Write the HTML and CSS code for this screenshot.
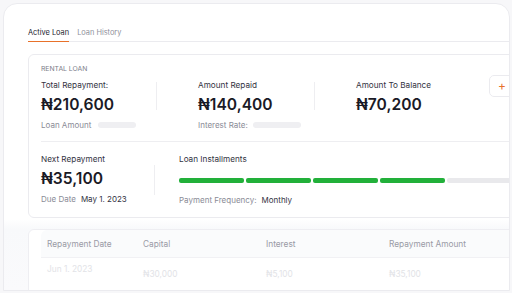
FILE: index.html
```html
<!DOCTYPE html>
<html lang="en">
<head>
    <meta charset="UTF-8">
    <meta name="viewport" content="width=device-width, initial-scale=1.0">
    <title>Active Loan</title>
    <link rel="stylesheet" href="styles.css">
</head>
<body>
    <div class="panel">
        <div class="tabs">
            <div class="tab active">Active Loan</div>
            <div class="tab">Loan History</div>
        </div>

        <div class="loan-card">
            <div class="card-top">
                <div class="card-main">
                    <div class="loan-type">RENTAL LOAN</div>
                    <div class="stats-row">
                        <div class="stat stat-first">
                            <div class="stat-label">Total Repayment:</div>
                            <div class="stat-amount">₦210,600</div>
                            <div class="stat-sub">Loan Amount <span class="skeleton short"></span></div>
                        </div>
                        <div class="vsep"></div>
                        <div class="stat stat-mid">
                            <div class="stat-label">Amount Repaid</div>
                            <div class="stat-amount">₦140,400</div>
                            <div class="stat-sub">Interest Rate: <span class="skeleton long"></span></div>
                        </div>
                        <div class="vsep"></div>
                        <div class="stat">
                            <div class="stat-label">Amount To Balance</div>
                            <div class="stat-amount">₦70,200</div>
                        </div>
                    </div>
                </div>
                <button class="add-btn">+</button>
            </div>

            <div class="hsep"></div>

            <div class="stats-row row-two">
                <div class="stat stat-next">
                    <div class="stat-label">Next Repayment</div>
                    <div class="stat-amount">₦35,100</div>
                    <div class="stat-sub">Due Date <span class="stat-value">May 1. 2023</span></div>
                </div>
                <div class="vsep tall"></div>
                <div class="stat installments">
                    <div class="stat-label">Loan Installments</div>
                    <div class="bars">
                        <span class="bar done"></span>
                        <span class="bar done"></span>
                        <span class="bar done"></span>
                        <span class="bar done"></span>
                        <span class="bar"></span>
                    </div>
                    <div class="stat-sub">Payment Frequency: <span class="stat-value">Monthly</span></div>
                </div>
            </div>
        </div>

        <div class="table-card">
            <div class="table-head">
                <div class="col c1">Repayment Date</div>
                <div class="col c2">Capital</div>
                <div class="col c3">Interest</div>
                <div class="col c4">Repayment Amount</div>
            </div>
            <div class="table-row">
                <div class="col c1">Jun 1. 2023</div>
                <div class="col c2 low">₦30,000</div>
                <div class="col c3 low">₦5,100</div>
                <div class="col c4 low">₦35,100</div>
            </div>
        </div>
    </div>
</body>
</html>
```

FILE: styles.css
```css
body {
    font-family: Inter, "Noto Sans", sans-serif;
    background-color: #f7f7f9;
    margin: 0;
    padding: 3px 2px 0 3px;
    color: #1c1c28;
}
.panel {
    height: 288px;
    box-sizing: border-box;
    background-color: #fff;
    border: 1px solid #ebebef;
    border-radius: 14px 14px 0 0;
    padding: 23px 0 0 24px;
    overflow: hidden;
    background-image: linear-gradient(#fff 0, #fff 215px, #f8f9fb 225px, #fafafc 100%);
}
.tabs {
    display: flex;
    gap: 8px;
    border-bottom: 1px solid #ebebef;
    font-size: 7.4px;
    line-height: 12px;
}
.tab {
    padding-bottom: 2px;
    color: #8f909b;
}
.tab.active {
    color: #23232e;
    box-shadow: inset 0 -1px 0 #e8712a;
    margin-bottom: -1px;
    padding-bottom: 3px;
}
.loan-card {
    width: 500px;
    margin-top: 12px;
    padding: 9px 0 11px 12px;
    box-sizing: border-box;
    background-color: #fff;
    border: 1px solid #ebebef;
    border-radius: 6px;
}
.card-top {
    display: flex;
}
.card-main {
    width: 448px;
}
.loan-type {
    font-size: 6.8px;
    line-height: 10px;
    color: #7b7c88;
    margin-bottom: 5px;
}
.stats-row {
    display: flex;
}
.stat-label {
    font-size: 8.2px;
    line-height: 12px;
    color: #33333f;
}
.stat-amount {
    font-size: 15.6px;
    line-height: 22px;
    font-weight: 600;
    margin: 3px 0;
    color: #1a1a26;
}
.stat-sub {
    font-size: 8px;
    line-height: 12px;
    color: #8a8b96;
    display: flex;
    align-items: center;
    gap: 5px;
}
.stat-value {
    color: #33333f;
}
.skeleton {
    display: inline-block;
    height: 6px;
    border-radius: 3px;
    background-color: #efeff2;
}
.skeleton.short {
    width: 38px;
    margin-left: 2px;
}
.skeleton.long {
    width: 48px;
}
.stat-first {
    width: 115px;
}
.stat-mid {
    width: 116px;
}
.vsep {
    width: 1px;
    height: 28px;
    margin: 3px 41px 0 0;
    background-color: #eeeef1;
}
.vsep.tall {
    height: 30px;
    margin: 12px 24px 0 0;
}
.add-btn {
    margin-top: 11px;
    width: 28px;
    height: 22px;
    padding: 0;
    border: 1px solid #ebebef;
    border-radius: 5px;
    background-color: #fff;
    color: #e8712a;
    font-family: Inter, sans-serif;
    font-size: 12px;
    line-height: 18px;
    text-align: left;
    padding-left: 8px;
}
.hsep {
    height: 1px;
    background-color: #eeeef1;
    margin: 10px 0 11px;
}
.stat-next {
    width: 113px;
}
.bars {
    display: flex;
    gap: 2px;
    margin: 13px 0 11px;
}
.bar {
    width: 65px;
    height: 5px;
    border-radius: 2px;
    background-color: #e9e9ec;
}
.bar.done {
    background-color: #22b03a;
}
.table-card {
    width: 500px;
    margin-top: 11px;
    border: 1px solid #eeeef2;
    border-radius: 6px;
    background-color: #fff;
    height: 80px;
    font-size: 8.3px;
}
.table-head {
    display: flex;
    height: 27px;
    align-items: center;
    background-color: #fafbfc;
    border-bottom: 1px solid #f1f1f4;
    color: #999aa5;
    margin-left: 12px;
    padding-left: 6px;
    border-radius: 6px 6px 0 0;
}
.table-row {
    display: flex;
    padding: 6px 0 0 18px;
    color: #e2e3e7;
}
.col.c1 {
    width: 96px;
}
.col.c2 {
    width: 123px;
}
.col.c3 {
    width: 123px;
}
.col.low {
    margin-top: 5px;
}
```
